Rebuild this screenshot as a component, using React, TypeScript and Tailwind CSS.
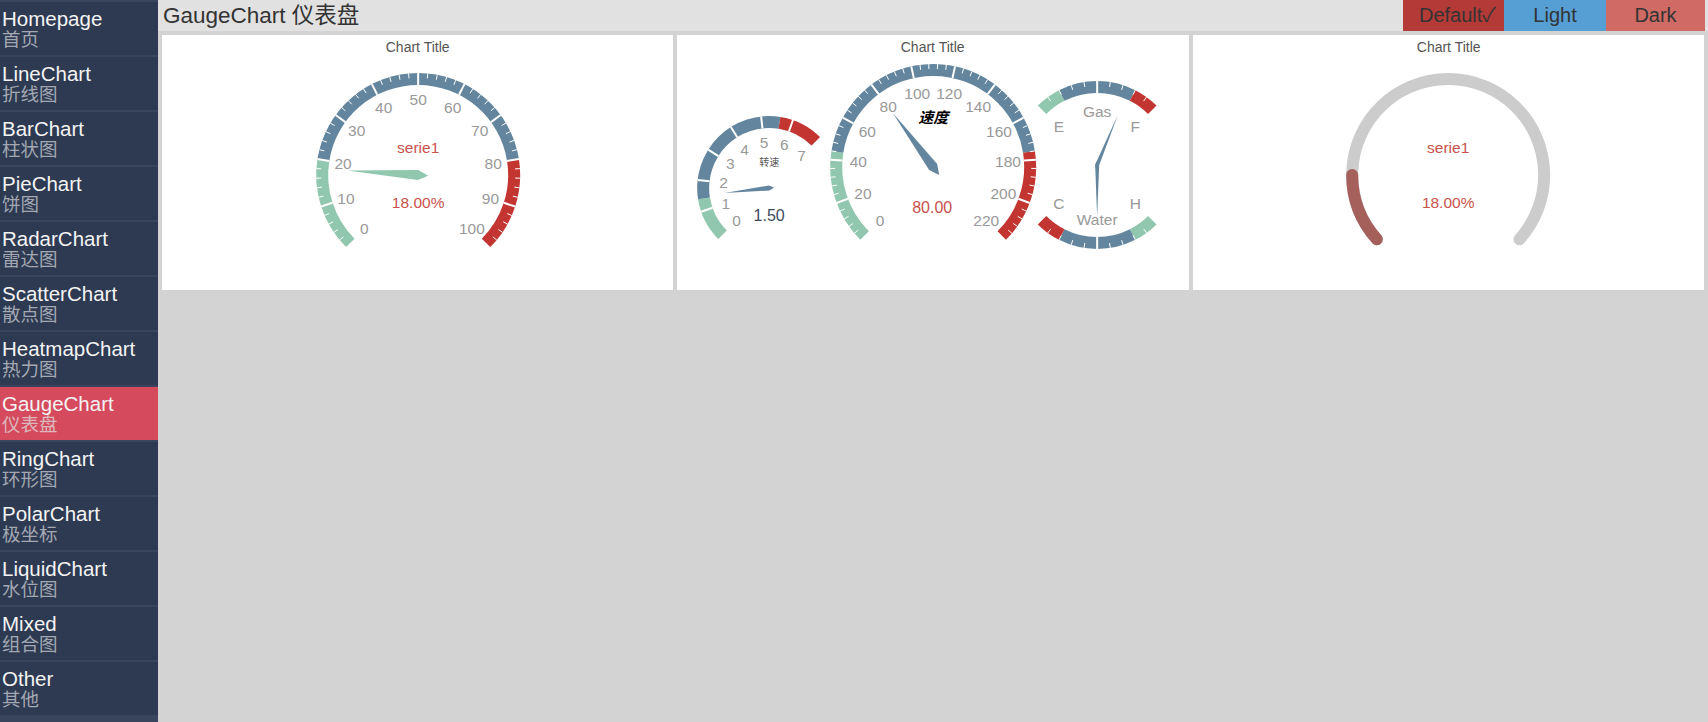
import React from "react";

const GREEN = "#91c7ae";
const BLUE = "#63869e";
const RED = "#c23531";
const LABEL = "#999999";
const TEXT_RED = "#c9514c";

const menu = [
  ["Homepage", "首页"],
  ["LineChart", "折线图"],
  ["BarChart", "柱状图"],
  ["PieChart", "饼图"],
  ["RadarChart", "雷达图"],
  ["ScatterChart", "散点图"],
  ["HeatmapChart", "热力图"],
  ["GaugeChart", "仪表盘"],
  ["RingChart", "环形图"],
  ["PolarChart", "极坐标"],
  ["LiquidChart", "水位图"],
  ["Mixed", "组合图"],
  ["Other", "其他"],
];

// angle in degrees, clockwise from 12 o'clock
const pt = (cx: number, cy: number, r: number, deg: number) => {
  const a = (deg * Math.PI) / 180;
  return [cx + r * Math.sin(a), cy - r * Math.cos(a)];
};

const sector = (cx: number, cy: number, r0: number, r1: number, a0: number, a1: number) => {
  const [x0, y0] = pt(cx, cy, r1, a0);
  const [x1, y1] = pt(cx, cy, r1, a1);
  const [x2, y2] = pt(cx, cy, r0, a1);
  const [x3, y3] = pt(cx, cy, r0, a0);
  const large = a1 - a0 > 180 ? 1 : 0;
  return `M${x0} ${y0}A${r1} ${r1} 0 ${large} 1 ${x1} ${y1}L${x2} ${y2}A${r0} ${r0} 0 ${large} 0 ${x3} ${y3}Z`;
};

const arc = (cx: number, cy: number, r: number, a0: number, a1: number) => {
  const [x0, y0] = pt(cx, cy, r, a0);
  const [x1, y1] = pt(cx, cy, r, a1);
  const large = a1 - a0 > 180 ? 1 : 0;
  return `M${x0} ${y0}A${r} ${r} 0 ${large} 1 ${x1} ${y1}`;
};

type GaugeProps = {
  cx: number;
  cy: number;
  r: number;
  w: number;
  start: number;
  end: number;
  splits: number;
  minor: number;
  labels: string[];
  labelR: number;
  value: number;
  len: number;
  hw: number;
};

const Gauge = (p: GaugeProps) => {
  const span = p.end - p.start;
  const ang = (f: number) => p.start + f * span;
  const bands: [number, number, string][] = [
    [0, 0.2, GREEN],
    [0.2, 0.8, BLUE],
    [0.8, 1, RED],
  ];
  const color = p.value <= 0.2 ? GREEN : p.value <= 0.8 ? BLUE : RED;

  const splitLines = [];
  for (let i = 1; i < p.splits; i++) {
    const a = ang(i / p.splits);
    const [x0, y0] = pt(p.cx, p.cy, p.r - p.w, a);
    const [x1, y1] = pt(p.cx, p.cy, p.r, a);
    splitLines.push(<line key={i} x1={x0} y1={y0} x2={x1} y2={y1} stroke="#fff" strokeWidth={2} />);
  }

  const ticks = [];
  if (p.minor > 0) {
    for (let i = 0; i < p.splits; i++) {
      for (let j = 1; j < p.minor; j++) {
        const a = ang((i + j / p.minor) / p.splits);
        const [x0, y0] = pt(p.cx, p.cy, p.r - 5, a);
        const [x1, y1] = pt(p.cx, p.cy, p.r, a);
        ticks.push(<line key={`${i}-${j}`} x1={x0} y1={y0} x2={x1} y2={y1} stroke="#fff" strokeWidth={1} />);
      }
    }
  }

  const a = ang(p.value);
  const tip = pt(p.cx, p.cy, p.len, a);
  const s1 = pt(p.cx, p.cy, p.hw, a - 90);
  const s2 = pt(p.cx, p.cy, p.hw, a + 90);
  const tail = pt(p.cx, p.cy, p.hw * 2, a + 180);

  return (
    <g>
      {bands.map(([f0, f1, c]) => (
        <path key={c} d={sector(p.cx, p.cy, p.r - p.w, p.r, ang(f0), ang(f1))} fill={c} />
      ))}
      {splitLines}
      {ticks}
      {p.labels.map((t, i) => {
        const [x, y] = pt(p.cx, p.cy, p.labelR, ang(i / (p.labels.length - 1)));
        return (
          <text key={t} x={x} y={y} fill={LABEL} fontSize={15.5} textAnchor="middle" dominantBaseline="central">
            {t}
          </text>
        );
      })}
      <polygon points={[tip, s1, tail, s2].map((q) => q.join(",")).join(" ")} fill={color} />
    </g>
  );
};

const ChartTitle = () => (
  <text x={255.5} y={12} fill="#555" fontSize={14} textAnchor="middle" dominantBaseline="central">
    Chart Title
  </text>
);

const PanelSimple = () => (
  <svg width="100%" height="100%" viewBox="0 0 511 255">
    <ChartTitle />
    <Gauge
      cx={256}
      cy={140}
      r={102}
      w={12}
      start={-135}
      end={135}
      splits={10}
      minor={5}
      labels={["0", "10", "20", "30", "40", "50", "60", "70", "80", "90", "100"]}
      labelR={76}
      value={0.18}
      len={71}
      hw={5}
    />
    <text x={256} y={112} fill={TEXT_RED} fontSize={15.5} textAnchor="middle" dominantBaseline="central">
      serie1
    </text>
    <text x={256} y={167} fill={TEXT_RED} fontSize={15.5} textAnchor="middle" dominantBaseline="central">
      18.00%
    </text>
  </svg>
);

const PanelCar = () => (
  <svg width="100%" height="100%" viewBox="0 0 511 255">
    <ChartTitle />
    <Gauge
      cx={92}
      cy={153}
      r={72}
      w={12}
      start={-135}
      end={45}
      splits={7}
      minor={0}
      labels={["0", "1", "2", "3", "4", "5", "6", "7"]}
      labelR={46}
      value={1.5 / 7}
      len={45}
      hw={2.5}
    />
    <text x={92} y={127} fill="#555" fontSize={10} textAnchor="middle" dominantBaseline="central">
      转速
    </text>
    <text x={92} y={180} fill="#3b4a5c" fontSize={16} textAnchor="middle" dominantBaseline="central">
      1.50
    </text>
    <Gauge
      cx={420}
      cy={130}
      r={84}
      w={12}
      start={-45}
      end={45}
      splits={2}
      minor={5}
      labels={["E", "Gas", "F"]}
      labelR={54}
      value={0.75}
      len={54}
      hw={2}
    />
    <Gauge
      cx={420}
      cy={130}
      r={84}
      w={12}
      start={135}
      end={225}
      splits={2}
      minor={5}
      labels={["H", "Water", "C"]}
      labelR={54}
      value={0.5}
      len={52}
      hw={2}
    />
    <Gauge
      cx={256}
      cy={132}
      r={103}
      w={12}
      start={-135}
      end={135}
      splits={11}
      minor={5}
      labels={["0", "20", "40", "60", "80", "100", "120", "140", "160", "180", "200", "220"]}
      labelR={75}
      value={80 / 220}
      len={67}
      hw={5}
    />
    <text
      x={256}
      y={82}
      fill="#000"
      fontSize={15}
      fontWeight="bold"
      fontStyle="italic"
      textAnchor="middle"
      dominantBaseline="central"
    >
      速度
    </text>
    <text x={255} y={172} fill={TEXT_RED} fontSize={16} textAnchor="middle" dominantBaseline="central">
      80.00
    </text>
  </svg>
);

const PanelRing = () => (
  <svg width="100%" height="100%" viewBox="0 0 511 255">
    <ChartTitle />
    <path d={arc(255, 140, 96, -132, 132)} fill="none" stroke="#cccccc" strokeWidth={12} strokeLinecap="round" />
    <path d={arc(255, 140, 96, -132, -90)} fill="none" stroke="#a5605c" strokeWidth={12} strokeLinecap="round" />
    <text x={255} y={112} fill={TEXT_RED} fontSize={15.5} textAnchor="middle" dominantBaseline="central">
      serie1
    </text>
    <text x={255} y={167} fill={TEXT_RED} fontSize={15.5} textAnchor="middle" dominantBaseline="central">
      18.00%
    </text>
  </svg>
);

const App = () => {
  return (
    <div className="flex h-[722px] w-full overflow-hidden font-[family-name:'Liberation_Sans','Noto_Sans_CJK_SC',sans-serif]">
      <div className="flex w-[158px] shrink-0 flex-col gap-[2px] bg-[#38455d] pt-[2px]">
        {menu.map(([en, zh]) => {
          const active = en === "GaugeChart";
          return (
            <div
              key={en}
              className={`h-[53px] shrink-0 pl-[2px] pt-[6px] ${active ? "bg-[#d64a5e]" : "bg-[#2d3a52]"}`}
            >
              <div className="text-[20.5px] leading-[22px] text-[#f4f4f4]">{en}</div>
              <div className={`text-[18.5px] leading-[20px] ${active ? "text-[#dcb7bc]" : "text-[#a3a8b2]"}`}>{zh}</div>
            </div>
          );
        })}
      </div>
      <div className="flex flex-1 flex-col bg-[#d3d3d3]">
        <div className="flex h-[31px] bg-[#e1e1e1] pr-[3px]">
          <div className="pl-[5px] text-[22.5px] leading-[31px] text-[#333]">GaugeChart 仪表盘</div>
          <div className="ml-auto flex text-[20px] leading-[31px] text-[#333]">
            <div className="w-[101px] bg-[#b33a36] pl-[8px] text-center">Default✓</div>
            <div className="w-[102px] bg-[#559fd5] text-center">Light</div>
            <div className="w-[99px] bg-[#cf6a64] text-center">Dark</div>
          </div>
        </div>
        <div className="grid grid-cols-3 gap-[4px] p-[4px]">
          <div className="h-[255px] bg-white">
            <PanelSimple />
          </div>
          <div className="h-[255px] bg-white">
            <PanelCar />
          </div>
          <div className="h-[255px] bg-white">
            <PanelRing />
          </div>
        </div>
      </div>
    </div>
  );
};

export default App;
